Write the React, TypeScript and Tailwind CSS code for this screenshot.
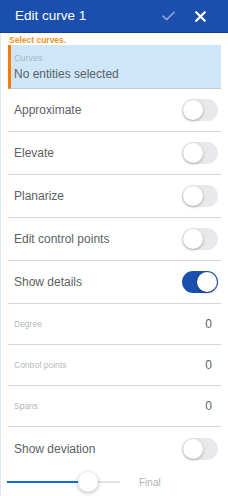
import { useState } from 'react'

interface ToggleRowProps {
  label: string
  on?: boolean
}

function Toggle({ on }: { on?: boolean }) {
  return (
    <div
      className={`w-[36px] h-[22px] rounded-full flex items-center px-[1px] ${
        on ? 'bg-[#1b4fae] justify-end' : 'bg-[#e9e9eb] justify-start'
      }`}
    >
      <div className="w-[20px] h-[20px] rounded-full bg-white shadow-[0_1px_3px_rgba(0,0,0,0.3)]" />
    </div>
  )
}

function ToggleRow({ label, on }: ToggleRowProps) {
  return (
    <div className="h-[43px] flex items-center justify-between pl-[6px] pr-[3px] border-b border-[#d3d6da]">
      <span className="text-[12px] text-[#5b5f66]">{label}</span>
      <Toggle on={on} />
    </div>
  )
}

function DetailRow({ label, value }: { label: string; value: number }) {
  return (
    <div className="h-[41px] flex items-center justify-between pl-[6px] pr-[9px] border-b border-[#d3d6da]">
      <span className="text-[8.5px] text-[#b4b7bb]">{label}</span>
      <span className="text-[12px] text-[#5b5f66]">{value}</span>
    </div>
  )
}

export default function App() {
  const [deviation] = useState(0.72)

  return (
    <div className="w-[228px] h-[496px] bg-white overflow-hidden flex flex-col" style={{ fontFamily: '"Liberation Sans", Arial, sans-serif' }}>
      {/* Header */}
      <div className="h-[33px] flex-shrink-0 bg-[#1b4fae] border-b border-[#153f8f] flex items-center pl-[15px]">
        <span className="text-[13.5px] text-white flex-1">Edit curve 1</span>
        <svg width="13" height="10" viewBox="0 0 13 10" className="mr-[20px]">
          <path d="M1 5.2 L4.6 8.6 L12 1.2" fill="none" stroke="#8ea6d8" strokeWidth="1.6" strokeLinecap="round" strokeLinejoin="round" />
        </svg>
        <svg width="11" height="11" viewBox="0 0 11 11" className="mr-[22px]">
          <path d="M1.2 1.2 L9.8 9.8 M9.8 1.2 L1.2 9.8" fill="none" stroke="#ffffff" strokeWidth="2.2" strokeLinecap="round" />
        </svg>
      </div>

      <div className="flex-1 flex flex-col px-[7px] border-l border-[#dde7ef]">
        <p className="text-[8.5px] text-[#f6921e] font-bold leading-none mt-[2px] ml-[1px] h-[10px] flex items-center">Select curves.</p>
        <div className="h-[44px] bg-[#cfe6f8] border-l-[3px] border-[#f57c00] border-b border-b-[#c3c9ce] flex flex-col justify-center pl-[3px]">
          <span className="text-[9px] text-[#a7b8c6] leading-none">Curves</span>
          <span className="text-[12px] text-[#5b5f66] leading-none mt-[5px]">No entities selected</span>
        </div>

        <ToggleRow label="Approximate" />
        <ToggleRow label="Elevate" />
        <ToggleRow label="Planarize" />
        <ToggleRow label="Edit control points" />
        <ToggleRow label="Show details" on />
        <DetailRow label="Degree" value={0} />
        <DetailRow label="Control points" value={0} />
        <DetailRow label="Spans" value={0} />

        <div className="h-[43px] flex items-center justify-between pl-[6px] pr-[3px]">
          <span className="text-[12px] text-[#5b5f66]">Show deviation</span>
          <Toggle />
        </div>

        {/* Slider */}
        <div className="flex items-center mt-[2px] -ml-[1px]">
          <div className="relative w-[113px] h-[20px] flex items-center">
            <div className="w-full h-[2px] bg-[#e2e2e2] flex">
              <div className="h-full bg-[#0b6cf0]" style={{ width: `${deviation * 100}%` }} />
            </div>
            <div
              className="absolute top-0 w-[20px] h-[20px] rounded-full bg-white shadow-[0_1px_4px_rgba(0,0,0,0.3)]"
              style={{ left: `${deviation * 113 - 10}px` }}
            />
          </div>
          <span className="ml-[19px] text-[10px] text-[#b0b3b7]">Final</span>
        </div>
      </div>
    </div>
  )
}
